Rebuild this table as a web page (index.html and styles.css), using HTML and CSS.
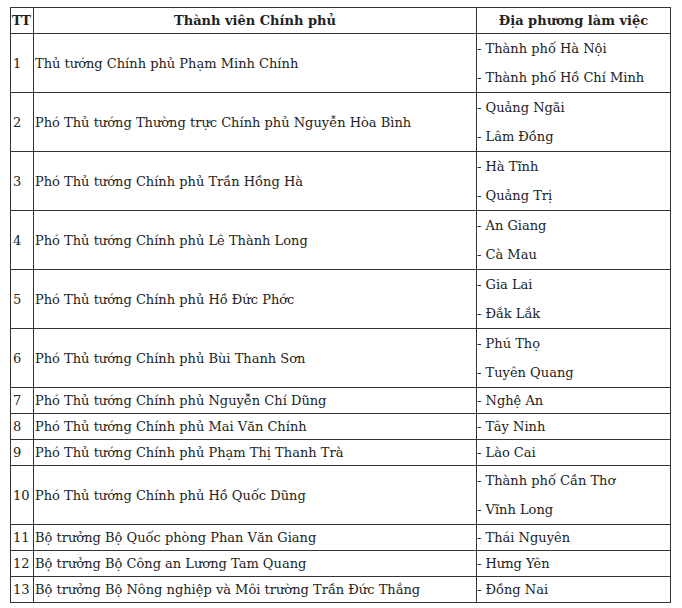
FILE: index.html
```
<!DOCTYPE html>
<html lang="vi">
<head>
<meta charset="utf-8">
<link rel="stylesheet" href="styles.css">
</head>
<body>
<table class="tbl">
  <colgroup><col class="c-tt"><col class="c-name"><col class="c-loc"></colgroup>
  <thead>
    <tr><th>TT</th><th>Thành viên Chính phủ</th><th>Địa phương làm việc</th></tr>
  </thead>
  <tbody>
    <tr class="dbl"><td class="tt">1</td><td class="name">Thủ tướng Chính phủ Phạm Minh Chính</td><td class="loc"><p>- Thành phố Hà Nội</p><p>- Thành phố Hồ Chí Minh</p></td></tr>
    <tr class="dbl"><td class="tt">2</td><td class="name">Phó Thủ tướng Thường trực Chính phủ Nguyễn Hòa Bình</td><td class="loc"><p>- Quảng Ngãi</p><p>- Lâm Đồng</p></td></tr>
    <tr class="dbl"><td class="tt">3</td><td class="name">Phó Thủ tướng Chính phủ Trần Hồng Hà</td><td class="loc"><p>- Hà Tĩnh</p><p>- Quảng Trị</p></td></tr>
    <tr class="dbl"><td class="tt">4</td><td class="name">Phó Thủ tướng Chính phủ Lê Thành Long</td><td class="loc"><p>- An Giang</p><p>- Cà Mau</p></td></tr>
    <tr class="dbl"><td class="tt">5</td><td class="name">Phó Thủ tướng Chính phủ Hồ Đức Phớc</td><td class="loc"><p>- Gia Lai</p><p>- Đắk Lắk</p></td></tr>
    <tr class="dbl"><td class="tt">6</td><td class="name">Phó Thủ tướng Chính phủ Bùi Thanh Sơn</td><td class="loc"><p>- Phú Thọ</p><p>- Tuyên Quang</p></td></tr>
    <tr><td class="tt">7</td><td class="name">Phó Thủ tướng Chính phủ Nguyễn Chí Dũng</td><td class="loc"><p>- Nghệ An</p></td></tr>
    <tr><td class="tt">8</td><td class="name">Phó Thủ tướng Chính phủ Mai Văn Chính</td><td class="loc"><p>- Tây Ninh</p></td></tr>
    <tr><td class="tt">9</td><td class="name">Phó Thủ tướng Chính phủ Phạm Thị Thanh Trà</td><td class="loc"><p>- Lào Cai</p></td></tr>
    <tr class="dbl"><td class="tt">10</td><td class="name">Phó Thủ tướng Chính phủ Hồ Quốc Dũng</td><td class="loc"><p>- Thành phố Cần Thơ</p><p>- Vĩnh Long</p></td></tr>
    <tr><td class="tt">11</td><td class="name">Bộ trưởng Bộ Quốc phòng Phan Văn Giang</td><td class="loc"><p>- Thái Nguyên</p></td></tr>
    <tr><td class="tt">12</td><td class="name">Bộ trưởng Bộ Công an Lương Tam Quang</td><td class="loc"><p>- Hưng Yên</p></td></tr>
    <tr><td class="tt">13</td><td class="name">Bộ trưởng Bộ Nông nghiệp và Môi trường Trần Đức Thắng</td><td class="loc"><p>- Đồng Nai</p></td></tr>
  </tbody>
</table>
</body>
</html>
```
FILE: styles.css
```
html, body { background: #fff; }
body {
  margin: 7px 0 0 10px;
  font-family: "DejaVu Serif", serif;
  font-size: 13px;
  color: #222;
}
.tbl {
  border-collapse: collapse;
  width: 660px;
  table-layout: fixed;
}
.c-tt { width: 23px; }
.c-name { width: 443px; }
.c-loc { width: 194px; }
.tbl th, .tbl td {
  border: 1px solid #333;
  padding: 0 1px 0 2px;
  vertical-align: middle;
  text-align: left;
  line-height: 25px;
}
.tbl td.name { padding-left: 1px; }
.tbl th {
  text-align: center;
  font-weight: bold;
  padding: 0;
}
.tbl th:first-child { text-align: left; padding-left: 1px; }
.tbl td.loc { padding: 0; }
.loc p { margin: 0; }
.dbl .loc p { line-height: 29px; }
```
